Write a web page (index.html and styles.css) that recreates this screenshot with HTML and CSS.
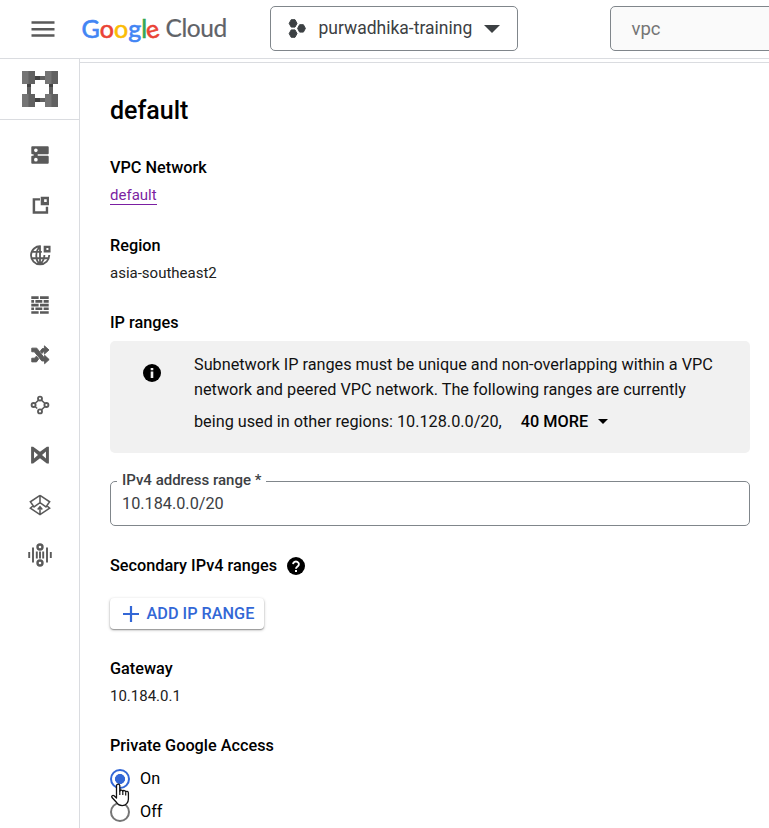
FILE: index.html
```html
<!DOCTYPE html>
<html lang="en">
<head>
<meta charset="utf-8">
<title>default – Subnet details</title>
<link rel="stylesheet" href="styles.css">
</head>
<body>
<header class="topbar">
  <svg class="menu" width="24" height="18" viewBox="0 0 24 18" fill="#5a5a5a"><path d="M.5 1.300h23v2.500H.5zM.5 8h23v2.500H.5zM.5 14.200h23v2.500H.5z"/></svg>
  <div class="logo"><span class="google"><span class="b">G</span><span class="r">o</span><span class="y">o</span><span class="b">g</span><span class="g">l</span><span class="r tilt">e</span></span><span class="cloud">Cloud</span></div>
  <button class="project">
    <svg width="18" height="19" viewBox="0 0 18 19" fill="#3c4043" stroke="#3c4043" stroke-width="1" stroke-linejoin="round"><path d="M3.200.7h3.800l2 3.700-2 3.700H3.200L1.200 4.400zM3.200 10.900h3.800l2 3.700-2 3.700H3.200l-2-3.700zM11.600 5.700h3.800l2 3.700-2 3.700h-3.800l-2-3.700z"/></svg>
    <span class="project-name">purwadhika-training</span>
    <svg class="caret" width="16" height="8" viewBox="0 0 16 8" fill="#3c4043"><path d="M0 0h16L8 8z"/></svg>
  </button>
  <div class="search">vpc</div>
</header>
<div class="shell">
  <nav class="rail">
    <div class="product">
      <svg width="36" height="36" viewBox="0 0 36 36"><path fill="#616161" d="M12 5h12v4H12zM12 27h12v4H12zM5 12h4v12H5zM27 12h4v12h-4z"/><path fill="#424242" d="M13 5h5v4h-5zM13 27h5v4h-5zM5 13h4v3H5zM27 13h4v3h-4z"/><path fill="#757575" d="M0 0h13v13H0zM23 0h13v13H23zM0 23h13v13H0zM23 23h13v13H23z"/><path fill="#616161" d="M6.500 0H13v13H6.500zM29.500 0H36v13h-6.500zM6.500 23H13v13H6.500zM29.500 23H36v13h-6.500z"/></svg>
    </div>
    <ul class="rail-list">
      <li><svg viewBox="0 0 24 24"><path fill-rule="evenodd" d="M3.500 2.500h17a1 1 0 0 1 1 1v6.700a1 1 0 0 1-1 1H9.500v1.600h11a1 1 0 0 1 1 1v6.700a1 1 0 0 1-1 1h-17a1 1 0 0 1-1-1v-6.700a1 1 0 0 1 1-1h1.500v-1.600H3.500a1 1 0 0 1-1-1V3.500a1 1 0 0 1 1-1zm4 2.400a2 2 0 1 0 0 4 2 2 0 0 0 0-4zm0 10.200a2 2 0 1 0 0 4 2 2 0 0 0 0-4z"/></svg></li>
      <li><svg viewBox="0 0 24 24"><path fill-rule="evenodd" d="M4 4.500h8v2.600H6.700v11.700h11.600V14h2.600v7.500H4zM12.800 3h9v9.200h-9zm3.700 2.800v2.800h2.800V5.800z"/></svg></li>
      <li><svg viewBox="0 0 24 24"><path fill="none" stroke="#5a5a5a" stroke-width="2" d="M13 2.500A9.900 9.900 0 1 0 22 12M12.500 2.600C6.500 7 6.500 18 12 22c3.500-3 4.800-6.500 4.800-10M2.800 8.500H14M2.800 15.500h18.400M12 2.500V22"/><path fill-rule="evenodd" d="M16 2h7.500v7.200H16zm3 2.400v2.200h2.200V4.400z"/></svg></li>
      <li><svg viewBox="0 0 24 24"><path d="M2.500 2.500h8v2.900h-8zM12 2.500h9.500v2.900H12zM2.500 6.600h3v2.900h-3zM7 6.600h7.500v2.900H7zM16 6.600h5.500v2.900H16zM2.500 10.600h8v2.900h-8zM12 10.600h9.500v2.900H12zM2.500 14.600h3v2.900h-3zM7 14.600h7.500v2.900H7zM16 14.600h5.500v2.900H16zM2.500 18.700h8v2.900h-8zM12 18.700h9.500v2.900H12z"/></svg></li>
      <li><svg viewBox="0 0 24 24"><path stroke="#5a5a5a" stroke-width="1" d="M3 4.500h5.500l8.300 10.800H17v-3l5 4.700-5 4.500v-3h-3L5.800 8.500H3zM3 15.500h3l2-2.200 2.500 3-2.300 3.200H3zM12.200 8l2.300-3h2.300V2l5 4.500-5 4.500V8.500h-1.300l-1.300 1.800z"/></svg></li>
      <li><svg viewBox="0 0 24 24"><g fill="none" stroke="#5a5a5a" stroke-width="2"><circle cx="12" cy="5" r="2.200"/><circle cx="5" cy="12" r="2.200"/><circle cx="19" cy="12" r="2.200"/><circle cx="12" cy="19" r="2.200"/><path d="M10.500 6.700l-4 3.700M13.500 6.700l4 3.700M17.500 13.600l-4 3.700M6.500 13.600l2.500 2.300" stroke-width="1.600"/></g></svg></li>
      <li><svg viewBox="0 0 24 24"><path fill-rule="evenodd" d="M2.300 3h2.200L12 8.500 19.500 3h2.200v18.200h-2.200L12 15.500l-7.500 5.700H2.300zM5.500 8.300v7.500l4.300-3.700zM18.500 8.300v7.500l-4.300-3.700z"/></svg></li>
      <li><svg viewBox="0 0 24 24"><path fill="none" stroke="#5a5a5a" stroke-width="1.700" d="M12 1.500v7.500M12 1.500L1.500 8.500l4 5.500L12 9.500l6.500 4.500 4-5.500L12 1.500M4.800 12.500L1.500 15.500 12 22.500l10.500-7-3.300-3M12 22v-8M9.500 17L12 14l2.500 3"/></svg></li>
      <li><svg class="wide" viewBox="0 0 24 24"><g fill="none" stroke="#5a5a5a" stroke-width="2.400"><circle cx="12" cy="4" r="2.500"/><circle cx="12" cy="20" r="2.500"/><path d="M1.200 9v6M5 4.500v15M8.800 8.500v7M12 8.500v7M15.200 8.500v7M19 4.500v15M22.800 9v6" stroke-width="1.900"/></g></svg></li>
    </ul>
  </nav>
  <main class="main">
    <div class="content">
      <h1>default</h1>
      <section class="item">
        <h2>VPC Network</h2>
        <p><a class="link" href="#">default</a></p>
      </section>
      <section class="item">
        <h2>Region</h2>
        <p>asia-southeast2</p>
      </section>
      <section class="item ranges">
        <h2>IP ranges</h2>
        <div class="notice">
          <svg width="18" height="18" viewBox="0 0 18 18"><circle cx="9" cy="9" r="9"/><path fill="#f1f1f1" d="M7.700 4h2.600v2.300H7.700zM7.700 7.600h2.600v6.400H7.700z"/></svg>
          <div class="notice-text">
            <div>Subnetwork IP ranges must be unique and non-overlapping within a VPC</div>
            <div>network and peered VPC network. The following ranges are currently</div>
            <div class="last">being used in other regions: 10.128.0.0/20,<b class="more">40 MORE</b><svg width="10" height="5" viewBox="0 0 10 5"><path d="M0 0h10L5 5z"/></svg></div>
          </div>
        </div>
        <fieldset class="field">
          <legend>IPv4 address range *</legend>
          <div class="value">10.184.0.0/20</div>
        </fieldset>
      </section>
      <section class="secondary">
        <h2>Secondary IPv4 ranges <svg width="18" height="18" viewBox="0 0 18 18"><circle cx="9" cy="9" r="9"/><path fill="none" stroke="#fff" stroke-width="1.900" d="M6.100 7.100a2.900 2.700 0 1 1 4.700 2.200C9.600 10.200 9 10.500 9 11.800"/><path fill="#fff" d="M8 12.900h2v2H8z"/></svg></h2>
        <button class="add"><svg width="16" height="16" viewBox="0 0 16 16" fill="#3367d6"><path d="M6.900 0h2.200v6.900H16v2.200H9.100V16H6.900V9.100H0V6.900h6.900z"/></svg><span>ADD IP RANGE</span></button>
      </section>
      <section class="item">
        <h2>Gateway</h2>
        <p>10.184.0.1</p>
      </section>
      <section class="item access">
        <h2>Private Google Access</h2>
        <label class="option"><span class="radio checked"></span>On
          <svg class="pointer" width="19" height="24" viewBox="0 0 19 24"><path fill="#fff" stroke="#111" stroke-width="1.300" stroke-linejoin="round" d="M5.500 15V2.500a1.700 1.700 0 0 1 3.300 0V8c.3-1.400 2.800-1.300 3 .3.500-1.200 2.700-1 2.900.6.600-1 2.700-.7 2.700 1.100v6c0 3.500-2.400 6.700-6.200 6.700-2.800 0-4.300-1-5.600-3.200L1 14.500c-.9-1.500.8-2.900 2.100-1.700z"/><path fill="none" stroke="#111" stroke-width="1.200" d="M8.800 7.500V12M11.800 8.300V12M14.700 9.200V12.500"/></svg>
        </label>
        <label class="option"><span class="radio"></span>Off</label>
      </section>
    </div>
  </main>
</div>
</body>
</html>
```
FILE: styles.css
```css
* { box-sizing: border-box; }
html, body { margin: 0; height: 828px; overflow: hidden; }
body { background: #fff; color: #000; font: 16.25px/24px Roboto, sans-serif; }
h1, h2, p, ul { margin: 0; padding: 0; font-weight: 500; }
p { font-weight: 400; }
button { font: inherit; background: #fff; padding: 0; }
svg { display: block; flex: none; }

.topbar { display: flex; height: 59px; border-bottom: 1px solid #dadce0; overflow: hidden; }
.menu { flex: none; margin: 20px 0 0 31px; }
.logo { display: flex; flex: none; width: 214px; padding: 12px 0 0 26.500px; font: 25px/32px Lato, sans-serif; }
.google { display: flex; flex: none; width: 84px; -webkit-text-stroke: .6px; }
.cloud { color: #5f6368; font-size: 24.5px; letter-spacing: -.4px; -webkit-text-stroke: .2px; }
.b { color: #4285f4; }
.r { color: #ea4335; }
.y { color: #fbbc05; }
.g { color: #34a853; }
.tilt { transform: rotate(-15deg); }
.project { display: flex; flex: none; width: 248px; height: 45px; margin: 6px 0 0 1px; padding-left: 17px; align-items: center; border: 1px solid #80868b; border-radius: 5px; color: #3c4043; }
.project-name { margin: -2px 0 0 12.500px; font-size: 17.5px; }
.caret { margin-left: 12px; }
.search { flex: none; width: 240px; height: 45px; margin: 6px 0 0 92px; padding-left: 20.500px; border: 1px solid #80868b; border-radius: 5px; background: #fafafa; color: #757575; font-size: 18.5px; line-height: 45px; }

.shell { display: flex; height: 769px; }
.rail { flex: none; width: 80px; border-right: 1px solid #dadce0; }
.product { height: 61px; padding: 12px 0 0 22px; border-bottom: 1px solid #dadce0; }
.rail-list { display: grid; grid-auto-rows: 50px; padding-top: 10px; list-style: none; }
.rail-list li { display: flex; align-items: center; justify-content: center; padding-left: 1px; }
.rail-list svg { width: 22px; height: 22px; fill: #5a5a5a; }
.rail-list .wide { width: 24px; height: 24px; }

.main { flex: 1; border-top: 3px solid #fff; }
.content { border-top: 1px solid #dadce0; padding: 32px 19px 0 30px; }
h1 { height: 32px; margin-bottom: 29px; font-size: 25px; line-height: 32px; }
h2 { font-size: 16.25px; line-height: 24px; }
.item { height: 49px; margin-bottom: 28px; }
.item:nth-of-type(1) { margin-bottom: 29px; }
.item p { padding-top: 3px; font-size: 15px; color: #212121; }
.item .link { display: inline-block; height: 19px; margin-top: 2px; line-height: 18px; border-bottom: 1px solid #7b1fa2; color: #7b1fa2; text-decoration: none; }
.item.ranges { height: 216px; margin: 0 0 27px; }
.notice { display: flex; height: 112px; margin-top: 6px; padding: 11px 0 0 33px; border-radius: 5px; background: #f1f1f1; }
.notice > svg { margin-top: 12px; }
.notice-text { margin-left: 33px; line-height: 25px; letter-spacing: -.01px; color: #111; white-space: nowrap; }
.last { display: flex; align-items: center; margin-top: 7px; }
.more { margin: 0 10px 0 19px; font-weight: 500; color: #000; }
.field { height: 56px; margin: 17px 0 0; padding: 0 7px 0 6px; border: 1px solid #80868b; border-radius: 5px; color: #3c4043; }
.field legend { height: 23px; padding: 0 5px; font-size: 15px; line-height: 21px; font-weight: 500; }
.field .value { margin-top: -1px; padding-left: 5px; }
.secondary { height: 76px; margin-bottom: 27px; }
.secondary h2 { display: flex; align-items: center; gap: 10px; }
.add { display: flex; align-items: center; width: 154px; height: 31px; margin-top: 20px; padding-left: 13px; border: 0; border-radius: 4px; color: #3367d6; font-weight: 500; box-shadow: 0 1px 3px rgba(0,0,0,.3), 0 1px 1px rgba(0,0,0,.25); }
.add span { margin-left: 7.500px; }
.access { height: 95px; margin: 0; }
.option { position: relative; display: flex; align-items: center; height: 24px; margin-top: 9px; gap: 10px; }
.radio { width: 20px; height: 20px; border: 2px solid #757575; border-radius: 50%; }
.radio.checked { border-color: #3367d6; background: radial-gradient(circle, #3367d6 4.700px, transparent 5.300px); }
.pointer { position: absolute; z-index: 1; left: 1px; top: 16px; }
```
